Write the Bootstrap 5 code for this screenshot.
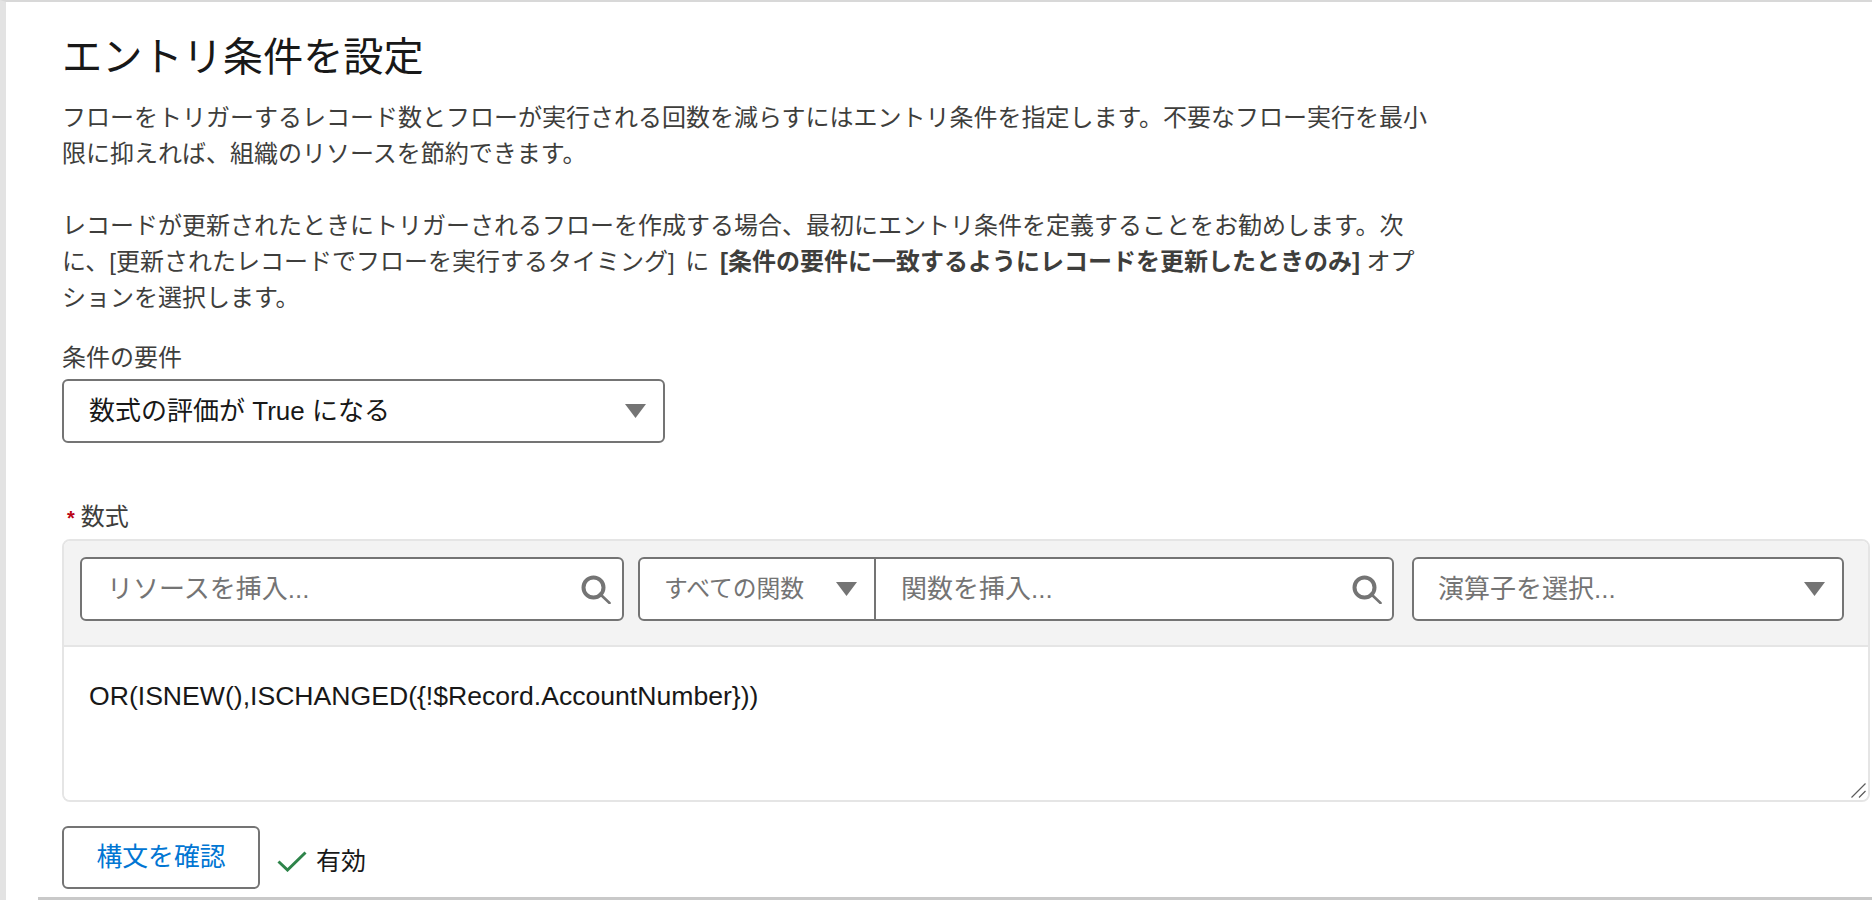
<!DOCTYPE html>
<html lang="ja">
<head>
<meta charset="utf-8">
<title>エントリ条件を設定</title>
<link href="https://cdn.jsdelivr.net/npm/bootstrap@5.3.0/dist/css/bootstrap.min.css" rel="stylesheet">
<style>
html,body{height:900px;overflow:hidden;background:#fff}
body{font-family:"Liberation Sans","Noto Sans CJK JP",sans-serif;font-size:24px;line-height:36px;color:#3e3e3c}
.shell{height:900px;border-left:6px solid #e3e3e3;border-top:2px solid #d8d8d8;display:flex;flex-direction:column}
.pane{flex:1;padding:34px 2px 0 56px;min-height:0}
.ttl{font-size:40.2px;font-weight:400;line-height:44px;margin:0 0 20px;color:#181818}
.intro{max-width:1372px;margin:0 0 24px;word-spacing:4px}
.intro strong{font-weight:700;margin-right:-4px}
.fld-label{display:block;line-height:36px;margin-bottom:3px;color:#3e3e3c}
.ctrl{height:64px;border:2px solid #747474;border-radius:6px;background:#fff;display:flex;align-items:center;justify-content:space-between}
.ctrl-main{width:603px;padding:0 17px 0 25px;color:#181818;margin-bottom:56px;font-size:26px}
.req{color:#ba0517;font-size:20px;font-weight:700;margin:0 6px 0 5px}
.fbox{position:relative;border:2px solid #e5e5e5;border-radius:8px;overflow:hidden}
.fbar{background:#f3f3f3;border-bottom:2px solid #e5e5e5;height:106px;padding:16px 24px 0 16px;display:flex}
.ph{color:#747474;font-size:26px}
.ph-sm{font-size:23.8px}
.c-res{width:544px;padding:0 11px 0 25px;margin-right:14px}
.c-grp{width:756px;margin-right:18px;display:flex;height:64px;border:2px solid #747474;border-radius:6px;background:#fff}
.c-grp-a{width:236px;border-right:2px solid #747474;display:flex;align-items:center;justify-content:space-between;padding:0 17px 0 24px}
.c-grp-b{flex:1;display:flex;align-items:center;justify-content:space-between;padding:0 10px 0 25px}
.c-op{width:432px;padding:0 17px 0 24px}
.ftext{display:block;width:100%;height:153px;border:0;outline:0;padding:31px 25px 0;font:26.6px/36px "Liberation Sans","Noto Sans CJK JP",sans-serif;color:#181818;resize:none;margin:0}
.grip{position:absolute;right:2px;bottom:2px}
.foot-row{margin-top:24px;display:flex;align-items:flex-start}
.chk-btn{width:198px;height:63px;border:2px solid #747474;border-radius:6px;background:#fff;color:#0176d3;font-size:25.8px;padding:0;line-height:1.2}
.ok-state{margin-left:17px;margin-top:17px;display:flex;align-items:center;gap:9px;color:#181818;font-size:25px}
.rule{height:3px;margin-left:32px;background:#c9c9c9;flex:none}
svg{flex:none;display:block}
</style>
</head>
<body>
<div class="shell">
  <div class="pane">
    <h2 class="ttl">エントリ条件を設定</h2>
    <p class="intro">フローをトリガーするレコード数とフローが実行される回数を減らすにはエントリ条件を指定します。不要なフロー実行を最小限に抑えれば、組織のリソースを節約できます。<br><br>レコードが更新されたときにトリガーされるフローを作成する場合、最初にエントリ条件を定義することをお勧めします。次に、[更新されたレコードでフローを実行するタイミング] に <strong>[条件の要件に一致するようにレコードを更新したときのみ]</strong> オプションを選択します。</p>
    <span class="fld-label">条件の要件</span>
    <div class="ctrl ctrl-main">
      <span>数式の評価が True になる</span>
      <svg width="21" height="14" viewBox="0 0 21 14"><path d="M0 0H21L10.5 14Z" fill="#747474"/></svg>
    </div>
    <span class="fld-label"><span class="req">*</span>数式</span>
    <div class="fbox">
      <div class="fbar">
        <div class="ctrl c-res">
          <span class="ph">リソースを挿入...</span>
          <svg width="30" height="29" viewBox="0 0 30 29"><circle cx="12.5" cy="12.5" r="10" fill="none" stroke="#747474" stroke-width="4"/><path d="M19 19L28.5 28" stroke="#747474" stroke-width="2.6" stroke-linecap="round"/></svg>
        </div>
        <div class="c-grp">
          <div class="c-grp-a">
            <span class="ph ph-sm">すべての関数</span>
            <svg width="21" height="14" viewBox="0 0 21 14"><path d="M0 0H21L10.5 14Z" fill="#747474"/></svg>
          </div>
          <div class="c-grp-b">
            <span class="ph">関数を挿入...</span>
            <svg width="30" height="29" viewBox="0 0 30 29"><circle cx="12.5" cy="12.5" r="10" fill="none" stroke="#747474" stroke-width="4"/><path d="M19 19L28.5 28" stroke="#747474" stroke-width="2.6" stroke-linecap="round"/></svg>
          </div>
        </div>
        <div class="ctrl c-op">
          <span class="ph">演算子を選択...</span>
          <svg width="21" height="14" viewBox="0 0 21 14"><path d="M0 0H21L10.5 14Z" fill="#747474"/></svg>
        </div>
      </div>
      <textarea class="ftext" spellcheck="false">OR(ISNEW(),ISCHANGED({!$Record.AccountNumber}))</textarea>
      <svg class="grip" width="15" height="15" viewBox="0 0 15 15"><path d="M0.5 14.5L14.5 0.5M8 14.5L14.5 8" stroke="#5c5c5c" stroke-width="1.2" fill="none"/></svg>
    </div>
    <div class="foot-row">
      <button type="button" class="btn chk-btn">構文を確認</button>
      <div class="ok-state">
        <svg width="30" height="21" viewBox="0 0 30 21"><path d="M1.5 10.5L10.5 19L28.5 1.5" fill="none" stroke="#2e844a" stroke-width="3"/></svg>
        <span>有効</span>
      </div>
    </div>
  </div>
  <div class="rule"></div>
</div>
</body>
</html>
